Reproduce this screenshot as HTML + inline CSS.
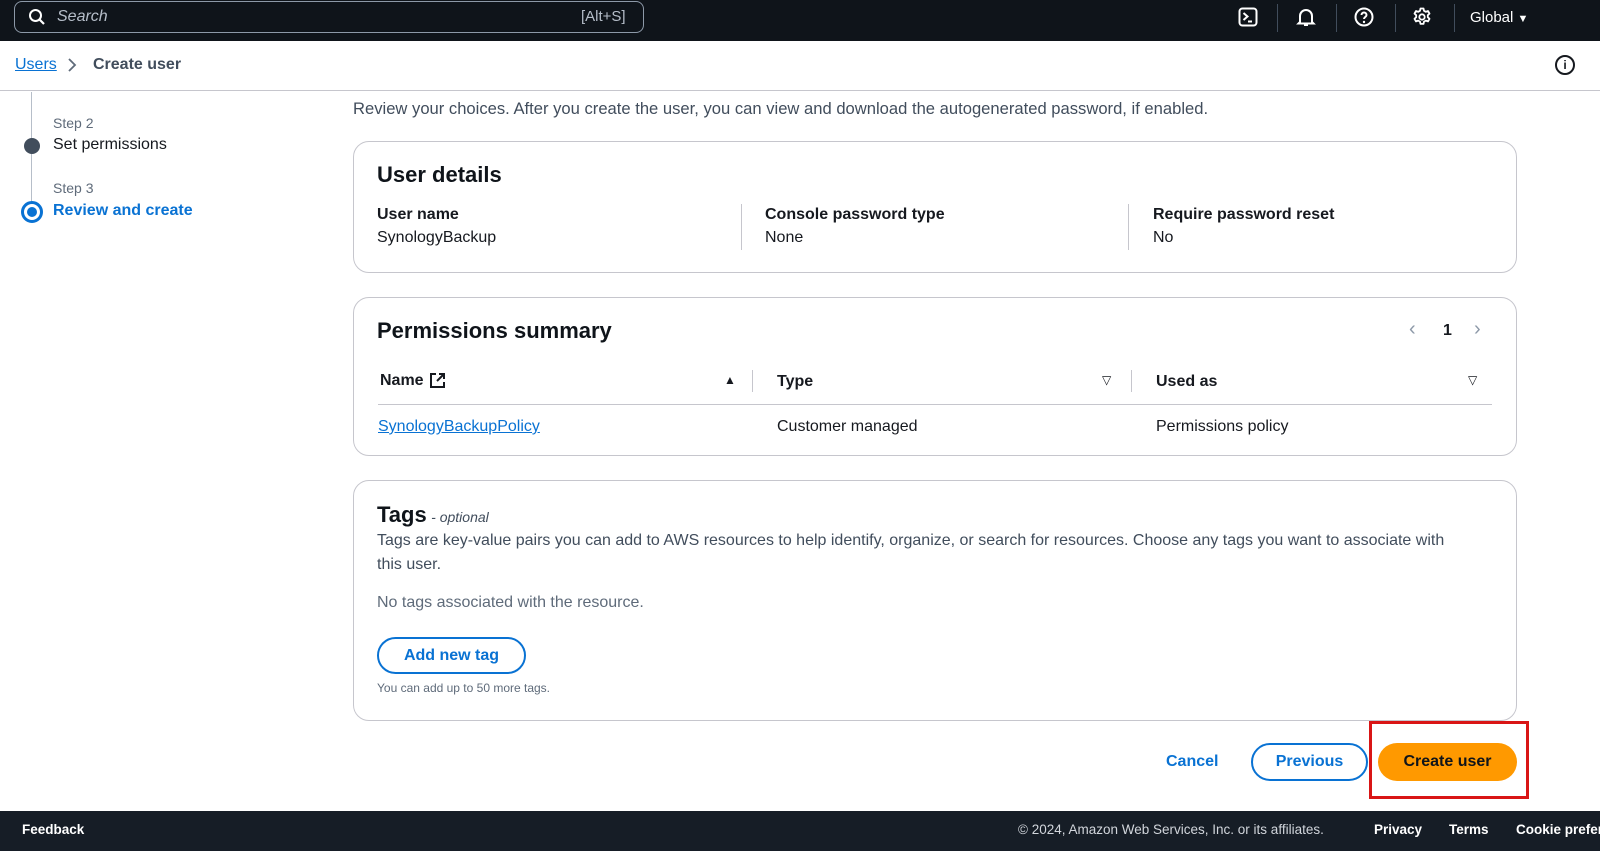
<!DOCTYPE html>
<html><head><meta charset="utf-8"><style>
*{box-sizing:border-box;margin:0;padding:0}
body{width:1600px;height:851px;overflow:hidden;background:#fff;font-family:"Liberation Sans",sans-serif;color:#16191f;position:relative;font-size:16px}
.abs{position:absolute;white-space:nowrap}
.top{left:0;top:0;width:1600px;height:41px;background:#0f141a}
.search{left:14px;top:1px;width:630px;height:32px;border:1px solid #8d99a8;border-radius:8px;background:#0f141a}
.card{position:absolute;left:353px;width:1164px;border:1px solid #c6c6cd;border-radius:16px;background:#fff}
.h{font-size:22px;font-weight:bold;color:#0f141a}
.lbl{font-weight:bold;font-size:16px}
.link{color:#0972d3}
.sep{width:1px;background:#c6c6cd}
.foot{left:0;top:811px;width:1600px;height:40px;background:#161d26;color:#fff;font-size:13.5px}
</style></head><body>
<div class="abs top"></div>
<div class="abs search"></div>
<svg class="abs" style="left:28px;top:8px" width="18" height="18" viewBox="0 0 18 18"><circle cx="7.5" cy="7.5" r="5.5" fill="none" stroke="#fff" stroke-width="2"/><path d="M11.5 11.5L16 16" stroke="#fff" stroke-width="2.2"/></svg>
<div class="abs" style="left:57px;top:8px;color:#b6bec9;font-style:italic;font-size:16px">Search</div>
<div class="abs" style="left:581px;top:8px;color:#b6bec9;font-size:15px">[Alt+S]</div>
<svg class="abs" style="left:1238px;top:7px" width="20" height="20" viewBox="0 0 20 20"><rect x="1.5" y="1.5" width="17" height="17" rx="3" fill="none" stroke="#fff" stroke-width="2"/><path d="M5.5 6l4 3.5-4 3.5M10 14.5h4" stroke="#fff" stroke-width="2" fill="none"/></svg>
<div class="abs sep" style="left:1277px;top:4px;height:28px;background:#414d5c"></div>
<svg class="abs" style="left:1296px;top:7px" width="20" height="20" viewBox="0 0 20 20"><path d="M4 15V9a6 6 0 0112 0v6l1.5 1.5h-15z" fill="none" stroke="#fff" stroke-width="2"/><path d="M8 18h4" stroke="#fff" stroke-width="2"/></svg>
<div class="abs sep" style="left:1336px;top:4px;height:28px;background:#414d5c"></div>
<svg class="abs" style="left:1354px;top:7px" width="20" height="20" viewBox="0 0 20 20"><circle cx="10" cy="10" r="8.5" fill="none" stroke="#fff" stroke-width="2"/><path d="M7.5 8a2.5 2.5 0 115 0c0 2-2.5 2-2.5 4" fill="none" stroke="#fff" stroke-width="2"/><circle cx="10" cy="15" r="1.2" fill="#fff"/></svg>
<div class="abs sep" style="left:1395px;top:4px;height:28px;background:#414d5c"></div>
<svg class="abs" style="left:1412px;top:7px" width="20" height="20" viewBox="0 0 20 20"><path d="M8.5 1.5h3l.5 2.3 1.8 1 2.2-.8 1.5 2.6-1.7 1.6v2l1.7 1.6-1.5 2.6-2.2-.8-1.8 1-.5 2.3h-3l-.5-2.3-1.8-1-2.2.8-1.5-2.6 1.7-1.6v-2L2.5 6.6 4 4l2.2.8 1.8-1z" fill="none" stroke="#fff" stroke-width="1.8" stroke-linejoin="round"/><circle cx="10" cy="10" r="2.7" fill="none" stroke="#fff" stroke-width="1.8"/></svg>
<div class="abs sep" style="left:1454px;top:4px;height:28px;background:#414d5c"></div>
<div class="abs" style="left:1470px;top:9px;color:#fff;font-size:15px">Global <span style="font-size:11px">▼</span></div>

<div class="abs" style="left:15px;top:56px;font-size:16px"><span class="link" style="text-decoration:underline">Users</span></div>
<svg class="abs" style="left:67px;top:58px" width="10" height="14" viewBox="0 0 10 14"><path d="M2 1l6 6-6 6" fill="none" stroke="#5f6b7a" stroke-width="1.8"/></svg>
<div class="abs" style="left:93px;top:56px;font-size:16px;font-weight:bold;color:#414d5c">Create user</div>
<div class="abs" style="left:1555px;top:55px;width:20px;height:20px;border:2px solid #16191f;border-radius:50%;font-size:12px;font-weight:bold;text-align:center;line-height:16px">i</div>
<div class="abs" style="left:0;top:90px;width:1600px;height:1px;background:#c6c6cd"></div>

<div class="abs" style="left:31px;top:92px;width:1px;height:130px;background:#b6bec9"></div>
<div class="abs" style="left:53px;top:115px;font-size:14px;color:#5f6b7a">Step 2</div>
<div class="abs" style="left:24px;top:138px;width:16px;height:16px;border-radius:50%;background:#414d5c"></div>
<div class="abs" style="left:53px;top:136px;font-size:16px;color:#16191f">Set permissions</div>
<div class="abs" style="left:53px;top:180px;font-size:14px;color:#5f6b7a">Step 3</div>
<div class="abs" style="left:21px;top:201px;width:22px;height:22px;border-radius:50%;border:3px solid #0972d3;background:#fff"></div>
<div class="abs" style="left:27px;top:207px;width:10px;height:10px;border-radius:50%;background:#0972d3"></div>
<div class="abs" style="left:53px;top:202px;font-size:16px;font-weight:bold;color:#0972d3">Review and create</div>

<div class="abs" style="left:353px;top:99px;font-size:16.6px;color:#414d5c">Review your choices. After you create the user, you can view and download the autogenerated password, if enabled.</div>

<div class="card" style="top:141px;height:132px">
<div class="abs h" style="left:23px;top:20px">User details</div>
<div class="abs lbl" style="left:23px;top:64px">User name</div>
<div class="abs" style="left:23px;top:87px">SynologyBackup</div>
<div class="abs sep" style="left:387px;top:62px;height:46px"></div>
<div class="abs lbl" style="left:411px;top:64px">Console password type</div>
<div class="abs" style="left:411px;top:87px">None</div>
<div class="abs sep" style="left:774px;top:62px;height:46px"></div>
<div class="abs lbl" style="left:799px;top:64px">Require password reset</div>
<div class="abs" style="left:799px;top:87px">No</div>
</div>

<div class="card" style="top:297px;height:159px">
<div class="abs h" style="left:23px;top:20px">Permissions summary</div>
<div class="abs" style="left:1055px;top:20px;color:#8d99a8;font-size:20px">‹</div>
<div class="abs" style="left:1089px;top:24px;font-weight:bold">1</div>
<div class="abs" style="left:1120px;top:20px;color:#8d99a8;font-size:20px">›</div>
<div class="abs lbl" style="left:26px;top:74px">Name</div>
<svg class="abs" style="left:75px;top:74px" width="17" height="17" viewBox="0 0 17 17"><path d="M7 2H2v13h13v-5M10 2h5v5M15 2L8 9" fill="none" stroke="#16191f" stroke-width="2"/></svg>
<div class="abs" style="left:370px;top:75px;font-size:12px">▲</div>
<div class="abs sep" style="left:398px;top:72px;height:22px"></div>
<div class="abs lbl" style="left:423px;top:75px">Type</div>
<div class="abs" style="left:748px;top:75px;font-size:12px">▽</div>
<div class="abs sep" style="left:777px;top:72px;height:22px"></div>
<div class="abs lbl" style="left:802px;top:75px">Used as</div>
<div class="abs" style="left:1114px;top:75px;font-size:12px">▽</div>
<div class="abs" style="left:24px;top:106px;width:1114px;height:1px;background:#c6c6cd"></div>
<div class="abs link" style="left:24px;top:120px;text-decoration:underline">SynologyBackupPolicy</div>
<div class="abs" style="left:423px;top:120px">Customer managed</div>
<div class="abs" style="left:802px;top:120px">Permissions policy</div>
</div>

<div class="card" style="top:480px;height:241px">
<div class="abs" style="left:23px;top:21px"><span class="h">Tags</span> <span style="font-style:italic;font-size:14px;color:#414d5c">- optional</span></div>
<div class="abs" style="left:23px;top:48px;width:1085px;line-height:24px;color:#414d5c;white-space:normal;font-size:16px">Tags are key-value pairs you can add to AWS resources to help identify, organize, or search for resources. Choose any tags you want to associate with this user.</div>
<div class="abs" style="left:23px;top:113px;color:#5f6b7a">No tags associated with the resource.</div>
<div class="abs" style="left:23px;top:156px;width:149px;height:37px;border:2px solid #0972d3;border-radius:20px;color:#0972d3;font-weight:bold;text-align:center;line-height:33px">Add new tag</div>
<div class="abs" style="left:23px;top:200px;font-size:12px;color:#5f6b7a">You can add up to 50 more tags.</div>
</div>

<div class="abs" style="left:1166px;top:753px;color:#0972d3;font-weight:bold">Cancel</div>
<div class="abs" style="left:1251px;top:743px;width:117px;height:38px;border:2px solid #0972d3;border-radius:20px;color:#0972d3;font-weight:bold;text-align:center;line-height:34px">Previous</div>
<div class="abs" style="left:1369px;top:721px;width:160px;height:78px;border:3px solid #d91515"></div>
<div class="abs" style="left:1378px;top:743px;width:139px;height:38px;background:#ff9900;border-radius:20px;color:#0f141a;font-weight:bold;text-align:center;line-height:38px">Create user</div>

<div class="abs foot">
<div class="abs" style="left:22px;top:11px;font-weight:bold">Feedback</div>
<div class="abs" style="left:1018px;top:11px;color:#d1d5db">© 2024, Amazon Web Services, Inc. or its affiliates.</div>
<div class="abs" style="left:1374px;top:11px;font-weight:bold">Privacy</div>
<div class="abs" style="left:1449px;top:11px;font-weight:bold">Terms</div>
<div class="abs" style="left:1516px;top:11px;font-weight:bold">Cookie preferences</div>
</div>
</body></html>
